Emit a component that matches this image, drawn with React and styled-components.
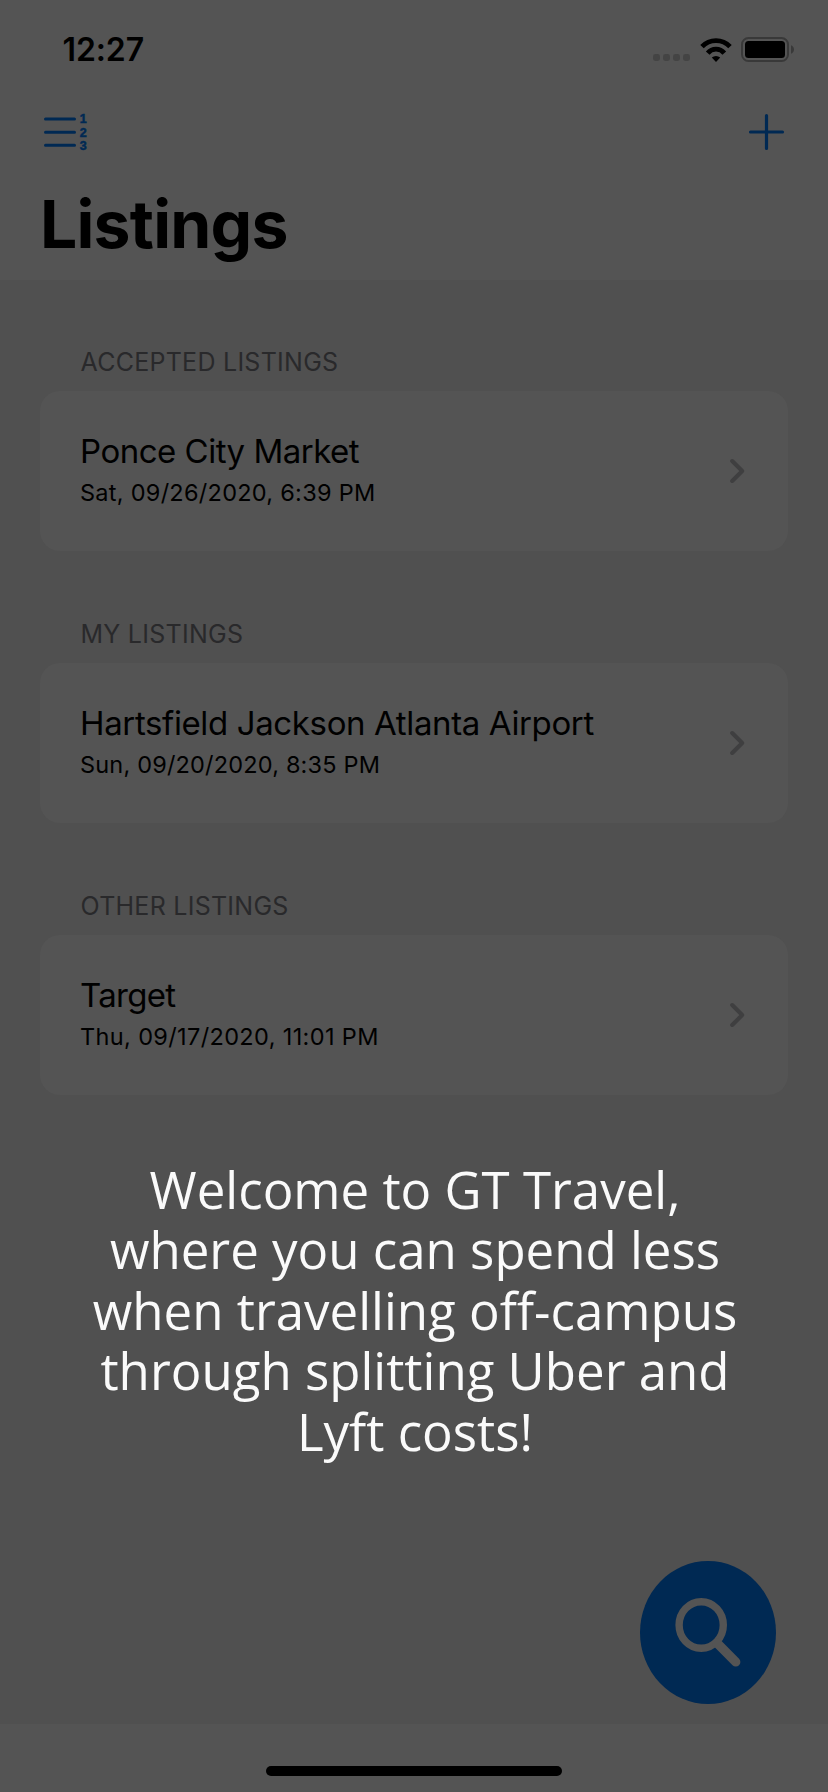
import React from "react";
import styled, { createGlobalStyle } from "styled-components";

const colors = {
  surface: "#545454",
  grouped: "#505050",
  tint: "#002953",
  text: "#000000",
  muted: "#29292b",
  chevron: "#3f3f40",
  faint: "#444444",
  outline: "#393939",
  message: "#fafafa",
};

const GlobalStyle = createGlobalStyle`
  * { box-sizing: border-box; }
  body { margin: 0; background: ${colors.surface}; }
`;

const Screen = styled.div`
  position: relative;
  display: flex;
  flex-direction: column;
  width: 828px;
  height: 1792px;
  overflow: hidden;
  background: ${colors.surface};
  color: ${colors.text};
  font-family: Inter, "Liberation Sans", sans-serif;
`;

const StatusBar = styled.header`
  display: flex;
  align-items: center;
  justify-content: space-between;
  height: 99px;
  padding: 0 34px 0 62.5px;
`;

const Clock = styled.span`
  font-size: 32px;
  font-weight: 600;
  letter-spacing: -0.1px;
`;

const StatusIcons = styled.div`
  display: flex;
  align-items: center;
  gap: 9px;
`;

const SignalDots = styled.div`
  display: flex;
  gap: 3px;
  align-self: flex-end;
  margin: 0 1px 1px 0;
`;

const Dot = styled.i`
  width: 7px;
  height: 7px;
  border-radius: 2.4px;
  background: ${colors.faint};
`;

const Toolbar = styled.nav`
  display: flex;
  align-items: center;
  justify-content: space-between;
  height: 66px;
  padding: 0 43px;
`;

const IconButton = styled.button`
  display: flex;
  padding: 0;
  border: 0;
  background: none;
  color: ${colors.tint};
`;

const PageTitle = styled.h1`
  height: 115px;
  margin: 0;
  padding: 3px 40px 0;
  font-size: 66px;
  font-weight: 700;
  line-height: 112px;
  letter-spacing: -0.8px;
`;

const List = styled.main`
  display: flex;
  flex: 1;
  flex-direction: column;
  gap: 67px;
  padding: 66px 40px 0;
  background: ${colors.grouped};
`;

const Section = styled.section`
  display: flex;
  flex-direction: column;
  gap: 13px;
`;

const SectionTitle = styled.h2`
  margin: 0;
  padding-left: 40.5px;
  color: ${colors.muted};
  font-size: 25px;
  font-weight: 400;
  line-height: 32px;
  letter-spacing: 0.26px;
`;

const Card = styled.article`
  display: flex;
  align-items: center;
  justify-content: space-between;
  height: 160px;
  padding: 0 42px 0 40px;
  border-radius: 20px;
  background: ${colors.surface};
`;

const CardText = styled.div`
  display: flex;
  flex-direction: column;
  gap: 6px;
  height: 80px;
`;

const Place = styled.span`
  font-size: 33px;
  line-height: 40px;
  letter-spacing: ${(p) => p.$tracking}px;
`;

const When = styled.span`
  font-size: 23.5px;
  line-height: 32px;
  letter-spacing: ${(p) => p.$tracking}px;
`;

const BottomBar = styled.footer`
  display: flex;
  justify-content: center;
  height: 68px;
  padding-top: 42px;
`;

const HomeIndicator = styled.div`
  width: 296px;
  height: 10px;
  border-radius: 5px;
  background: ${colors.text};
`;

const Welcome = styled.p`
  position: absolute;
  top: 1159px;
  left: 89px;
  width: 652px;
  margin: 0;
  color: ${colors.message};
  font-family: "Open Sans", "Noto Sans", sans-serif;
  font-size: 51px;
  line-height: 60.4px;
  text-align: center;
`;

const SearchButton = styled.button`
  position: absolute;
  right: 52px;
  bottom: 88px;
  display: flex;
  align-items: center;
  justify-content: center;
  width: 136px;
  height: 143px;
  padding: 0 0 2px;
  border: 0;
  border-radius: 50%;
  background: ${colors.tint};
  color: ${colors.surface};
`;

const WifiIcon = () => (
  <svg width="32" height="24" viewBox="0 0 32 24" fill="none" stroke="#000" strokeWidth="4.8">
    <path d="M2 8.7A19.3 19.3 0 0 1 30 8.7" />
    <path d="M7.7 15.1A10.8 10.8 0 0 1 24.3 15.1" />
    <path d="M11.8 19.6A6 6 0 0 1 20.2 19.6L16 24Z" fill="#000" stroke="none" />
  </svg>
);

const BatteryIcon = () => (
  <svg width="53" height="25" viewBox="0 0 53 25">
    <rect x="1" y="1" width="46" height="23" rx="6.5" fill="none" stroke={colors.outline} strokeWidth="2" />
    <rect x="4" y="4" width="40" height="17" rx="3.5" fill="#000" />
    <path d="M50 8.2C54 9.5 54 15.5 50 16.8Z" fill={colors.outline} />
  </svg>
);

const NumberedListIcon = () => (
  <svg width="50" height="46" viewBox="0 -4 50 46">
    <path d="M2.5 6.1H31.5M2.5 19.3H31.5M2.5 32.3H31.5" stroke="currentColor" strokeWidth="3" strokeLinecap="round" />
    <g fill="currentColor" stroke="currentColor" strokeWidth="0.5" fontSize="12.5" fontWeight="800" textAnchor="middle">
      <text x="40.2" y="10.4">1</text>
      <text x="40.2" y="23.6">2</text>
      <text x="40.2" y="36.8">3</text>
    </g>
  </svg>
);

const PlusIcon = () => (
  <svg width="37" height="38" viewBox="0 0 37 38">
    <path d="M2.5 19H34.5M18.5 2.5V35.5" stroke="currentColor" strokeWidth="3.2" strokeLinecap="round" />
  </svg>
);

const ChevronIcon = () => (
  <svg width="16" height="26" viewBox="0 0 16 26">
    <path
      d="M2.2 3L12.2 13L2.2 23"
      fill="none"
      stroke={colors.chevron}
      strokeWidth="4"
      strokeLinecap="round"
      strokeLinejoin="round"
    />
  </svg>
);

const SearchIcon = () => (
  <svg width="66" height="70" viewBox="0 0 66 70" fill="none" stroke="currentColor">
    <ellipse cx="26.2" cy="28" rx="22.1" ry="23.3" strokeWidth="7.4" />
    <path d="M42 46L60.8 65" strokeWidth="9.2" strokeLinecap="round" />
  </svg>
);

const sections = [
  {
    title: "ACCEPTED LISTINGS",
    place: "Ponce City Market",
    when: "Sat, 09/26/2020, 6:39 PM",
    placeTracking: -0.5,
    whenTracking: 0.27,
  },
  {
    title: "MY LISTINGS",
    place: "Hartsfield Jackson Atlanta Airport",
    when: "Sun, 09/20/2020, 8:35 PM",
    placeTracking: -0.37,
    whenTracking: 0.18,
  },
  {
    title: "OTHER LISTINGS",
    place: "Target",
    when: "Thu, 09/17/2020, 11:01 PM",
    placeTracking: -0.7,
    whenTracking: 0.36,
  },
];

export default function App() {
  return (
    <Screen>
      <GlobalStyle />
      <StatusBar>
        <Clock>12:27</Clock>
        <StatusIcons>
          <SignalDots>
            <Dot />
            <Dot />
            <Dot />
            <Dot />
          </SignalDots>
          <WifiIcon />
          <BatteryIcon />
        </StatusIcons>
      </StatusBar>
      <Toolbar>
        <IconButton aria-label="Sort listings">
          <NumberedListIcon />
        </IconButton>
        <IconButton aria-label="Add listing">
          <PlusIcon />
        </IconButton>
      </Toolbar>
      <PageTitle>Listings</PageTitle>
      <List>
        {sections.map((s) => (
          <Section key={s.title}>
            <SectionTitle>{s.title}</SectionTitle>
            <Card>
              <CardText>
                <Place $tracking={s.placeTracking}>{s.place}</Place>
                <When $tracking={s.whenTracking}>{s.when}</When>
              </CardText>
              <ChevronIcon />
            </Card>
          </Section>
        ))}
      </List>
      <BottomBar>
        <HomeIndicator />
      </BottomBar>
      <Welcome>
        Welcome to GT Travel, where you can spend less when travelling off-campus through splitting Uber and Lyft costs!
      </Welcome>
      <SearchButton aria-label="Search">
        <SearchIcon />
      </SearchButton>
    </Screen>
  );
}
